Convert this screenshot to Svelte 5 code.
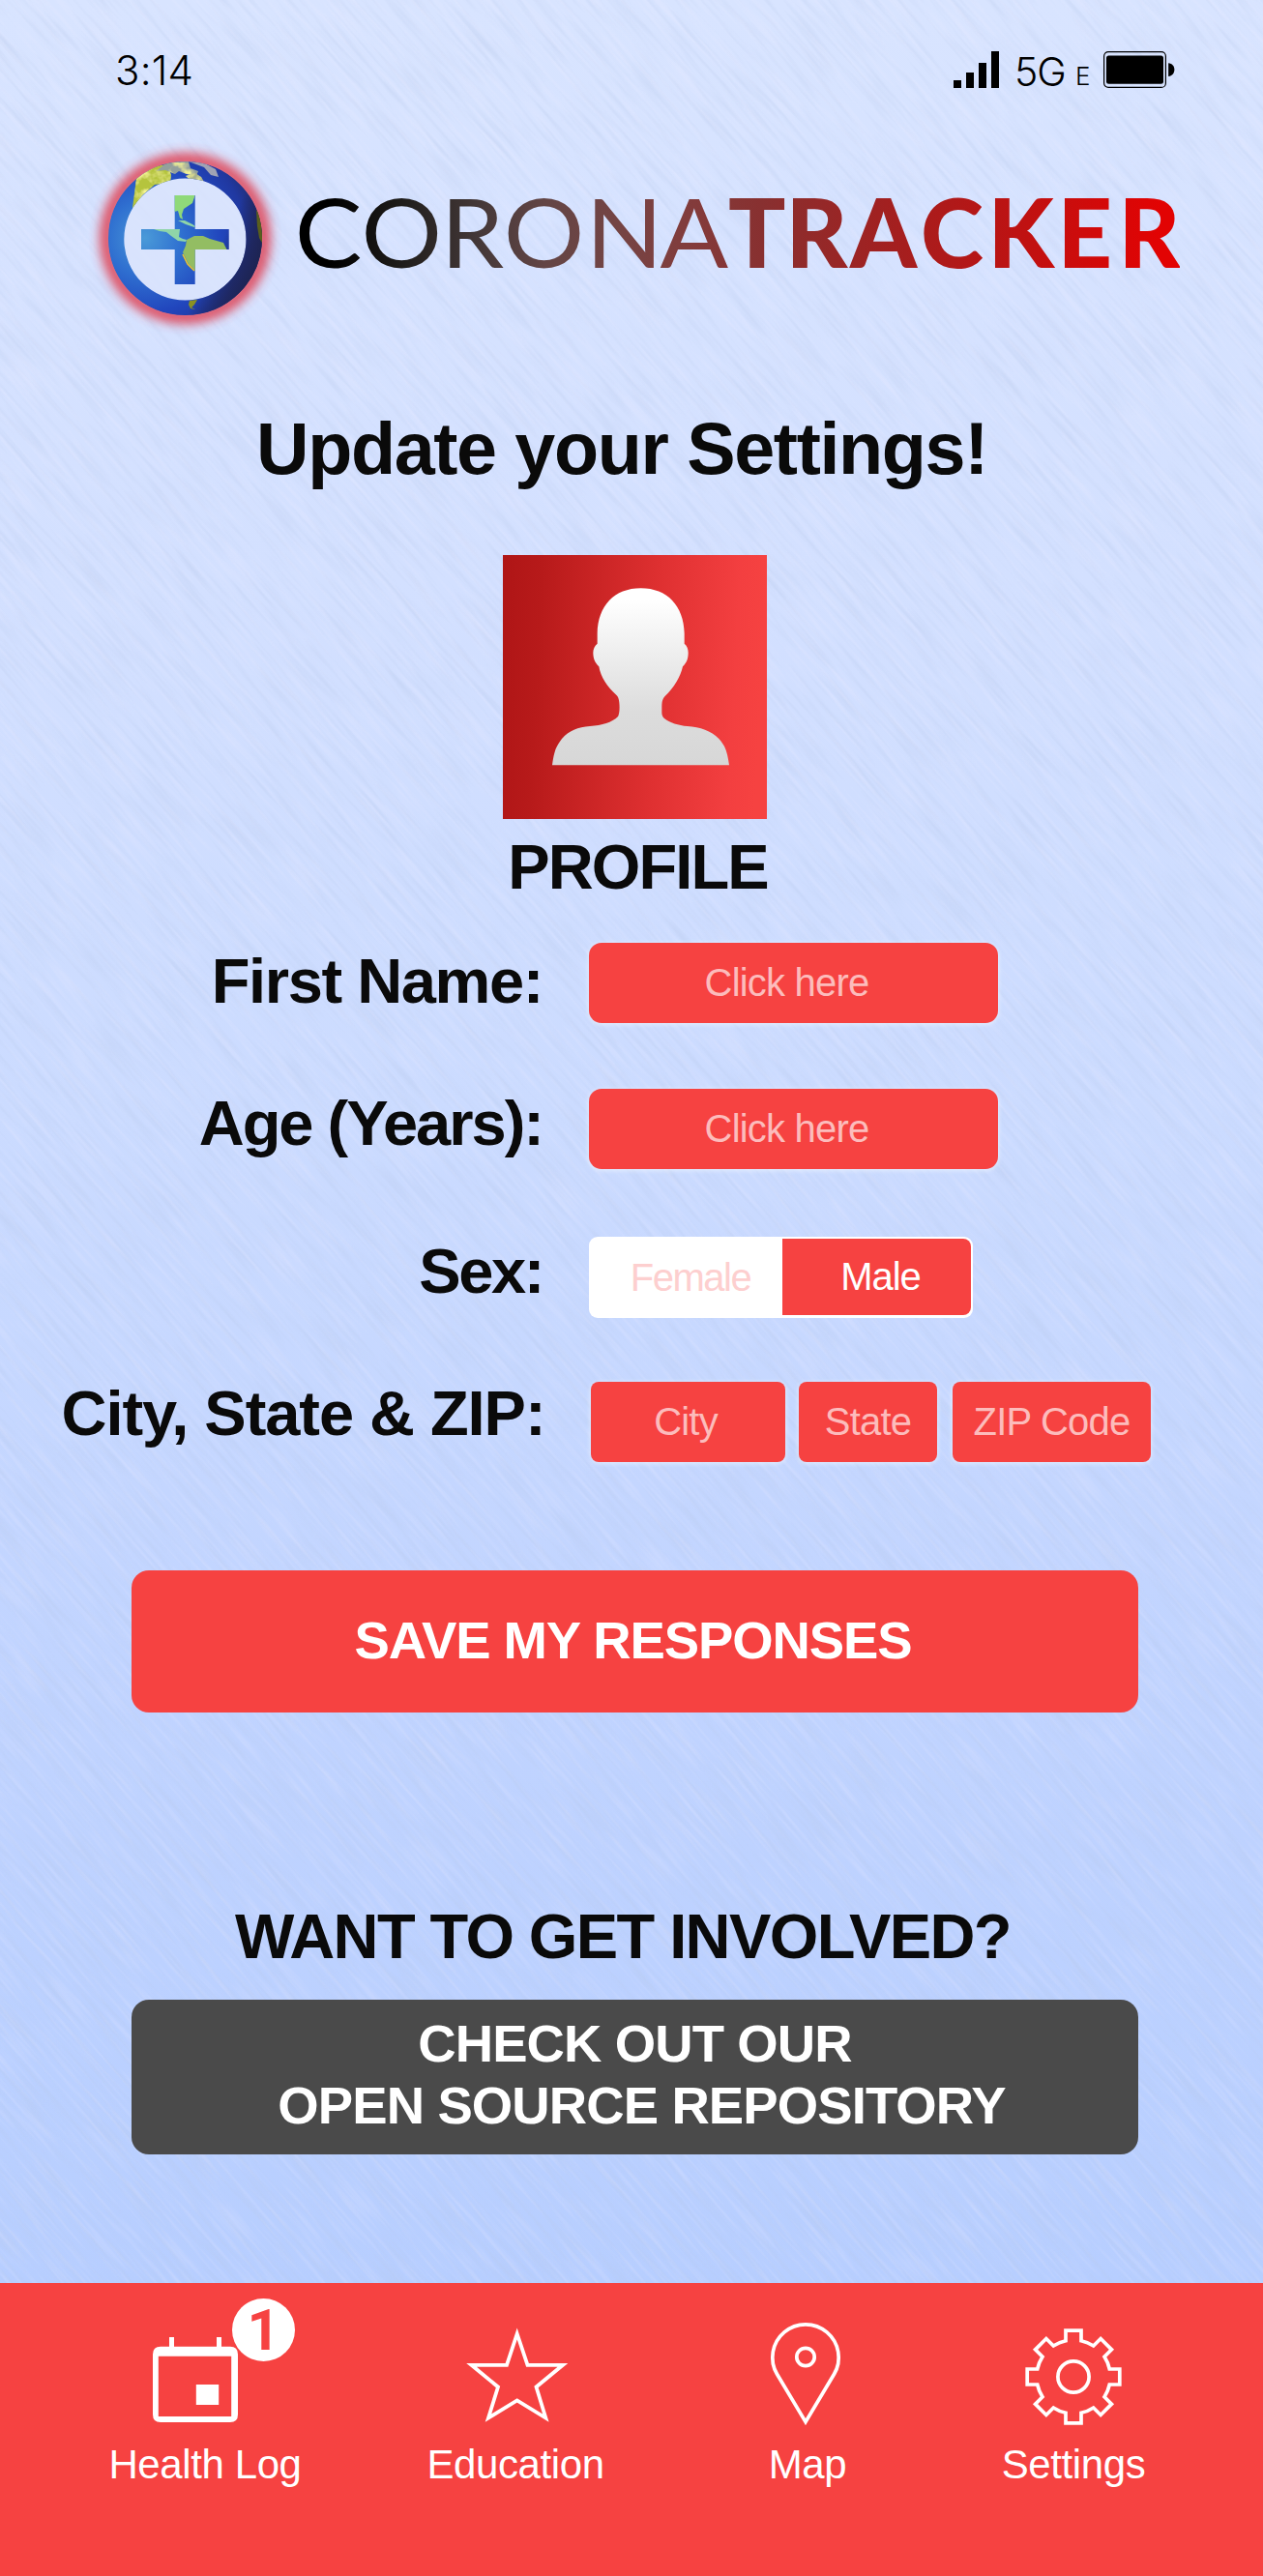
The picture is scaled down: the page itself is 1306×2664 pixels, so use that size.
<script>
  const tooth = [[-8, -37.3], [-8, -47.8], [8, -47.8], [8, -37.3]];
  // Eight identical teeth joined by arcs of the gear's body
  const gearPath =
    [0, 1, 2, 3, 4, 5, 6, 7]
      .map((n) => {
        const a = (n * Math.PI) / 4;
        const pts = tooth.map(([x, y]) =>
          `${(50 + x * Math.cos(a) - y * Math.sin(a)).toFixed(2)} ${(50 + x * Math.sin(a) + y * Math.cos(a)).toFixed(2)}`
        );
        return `${n === 0 ? 'M' : 'A38.2 38.2 0 0 1 '}${pts[0]}L${pts[1]}L${pts[2]}L${pts[3]}`;
      })
      .join('') + 'A38.2 38.2 0 0 1 42 12.7Z';
</script>

<div class="screen">
  <svg class="texture" viewBox="0 0 1306 2664" aria-hidden="true">
    <filter id="dark" x="0" y="0" width="100%" height="100%">
      <feTurbulence type="fractalNoise" baseFrequency="0.013 0.19" numOctaves="2" seed="4" />
      <feColorMatrix values="0 0 0 0 0.48  0 0 0 0 0.58  0 0 0 0 0.82  1.6 0 0 0 -0.74" />
    </filter>
    <filter id="pale" x="0" y="0" width="100%" height="100%">
      <feTurbulence type="fractalNoise" baseFrequency="0.014 0.22" numOctaves="2" seed="11" />
      <feColorMatrix values="0 0 0 0 0.9  0 0 0 0 0.86  0 0 0 0 1  1.8 0 0 0 -0.85" />
    </filter>
    <g transform="rotate(49 653 1332)">
      <rect x="-1000" y="-300" width="3300" height="3300" filter="url(#dark)" opacity="0.48" />
      <rect x="-1000" y="-300" width="3300" height="3300" filter="url(#pale)" opacity="0.28" />
    </g>
  </svg>

  <header class="status">
    <span class="time">3:14</span>
    <span class="signal"><i class="b1"></i><i class="b2"></i><i class="b3"></i><i class="b4"></i></span>
    <span class="net">5G</span>
    <span class="net-e">E</span>
    <svg class="battery" width="74" height="38" viewBox="0 0 74 38">
      <rect x="0.6" y="0.6" width="63.8" height="36.8" rx="4.5" fill="none" stroke="#000" stroke-width="1.2" />
      <rect x="3" y="4.4" width="59" height="29.4" rx="2.5" />
      <path d="M67.2 12.3C71 12.6 73.4 15.5 73.4 19S71 25.7 67.2 26Z" />
    </svg>
  </header>

  <div class="brand">
    <svg width="1140" height="230" viewBox="80 130 1140 230" role="img" aria-label="CoronaTracker">
      <defs>
        <filter id="glow" x="-40%" y="-40%" width="180%" height="180%"><feGaussianBlur stdDeviation="5.5" /></filter>
        <filter id="soft" x="-20%" y="-20%" width="140%" height="140%"><feGaussianBlur stdDeviation="0.7" /></filter>
        <filter id="land" x="0" y="0" width="100%" height="100%">
          <feTurbulence type="fractalNoise" baseFrequency="0.09" numOctaves="3" seed="7" result="n" />
          <feColorMatrix in="n" values="0 0 0 0 0.93  0 0 0 0 0.92  0 0 0 0 0.3  3 0 0 0 -1.3" result="c" />
          <feComposite in="c" in2="SourceGraphic" operator="in" result="t" />
          <feMerge><feMergeNode in="SourceGraphic" /><feMergeNode in="t" /></feMerge>
        </filter>
        <radialGradient id="sea" gradientUnits="userSpaceOnUse" cx="150" cy="246" r="130">
          <stop offset="0" stop-color="#4a9ad8" />
          <stop offset="0.3" stop-color="#2f6fd0" />
          <stop offset="0.6" stop-color="#2146bd" />
          <stop offset="0.8" stop-color="#2038a0" />
          <stop offset="1" stop-color="#22285c" />
        </radialGradient>
        <linearGradient id="night" gradientUnits="userSpaceOnUse" x1="205" y1="240" x2="272" y2="272">
          <stop offset="0.35" stop-color="#1a1c40" stop-opacity="0" />
          <stop offset="0.75" stop-color="#1e2350" stop-opacity="0.75" />
          <stop offset="1" stop-color="#1c2148" stop-opacity="0.85" />
        </linearGradient>
        <linearGradient id="wordmark" gradientUnits="userSpaceOnUse" x1="340" y1="0" x2="1200" y2="0">
          <stop offset="0" stop-color="#000" />
          <stop offset="0.09" stop-color="#201e1c" />
          <stop offset="0.18" stop-color="#443838" />
          <stop offset="0.26" stop-color="#634545" />
          <stop offset="0.35" stop-color="#754444" />
          <stop offset="0.44" stop-color="#833b3b" />
          <stop offset="0.52" stop-color="#883030" />
          <stop offset="0.67" stop-color="#a22020" />
          <stop offset="0.84" stop-color="#c01111" />
          <stop offset="1" stop-color="#e20303" />
        </linearGradient>
        <linearGradient id="wordmark-wide" href="#wordmark" x1="321" x2="1132" />
        <clipPath id="globe">
          <path clip-rule="evenodd" d="M112 246.5a79.5 79.5 0 1 0 159 0a79.5 79.5 0 1 0-159 0ZM128.3 247.5a63.1 63.1 0 1 1 126.2 0a63.1 63.1 0 1 1-126.2 0Z" />
          <path d="M180.7 202h21v35h35v21h-35v36h-21v-36H146v-21h34.7Z" />
        </clipPath>
      </defs>
      <circle cx="191.5" cy="246.5" r="81" fill="none" stroke="#e0384a" stroke-width="15" opacity="0.85" filter="url(#glow)" />
      <circle cx="191.5" cy="247.5" r="64" fill="#dae3fc" opacity="0.8" />
      <g clip-path="url(#globe)">
        <circle cx="191.5" cy="246.5" r="80" fill="url(#sea)" />
        <circle cx="191.5" cy="246.5" r="80" fill="url(#night)" />
        <g filter="url(#land)">
          <path fill="#b5c43c" d="M137 215l4-30 12-12 20-3 4 11-1 8-16 2-13 11-6 12Z" />
          <path fill="#93a09c" d="M161 177l12-9 22-1 2 7 8 3-2 5-10-2-8-3-4 3-10-4Z" />
          <path fill="#a7b08c" d="M192 182l10-3 6 4 3 5-12 0Z" />
        </g>
        <g filter="url(#soft)">
          <path fill="#a0a3b4" d="M195 167l15 1 13 7 3 8-8-2-7-8-8-3Z" />
          <path fill="#8fd97a" d="M180 201h22l-3 9-9 6-2 6 1 5-3-2-2-7-4 1Z" />
          <path fill="#8fd5a8" d="M159 237h27l-1 8 4 2 4 1-1 2-8-1-7-5-5-4-7-1ZM184 228l7 0 8 4 3 2-1 1-9-3Z" />
          <path fill="#93bd63" d="M193 248l8-4 9 0 7 3 14 4 4 8-20 4-8 16-4 2-8-8-6-12 3-7Z" />
          <path fill="none" stroke="#e8c234" stroke-width="1.6" d="M189 263l5 10 7 7" />
          <path fill="#8a9222" d="M196 311l8-1-3 5-3 3 4 2-5-1-2-4Z" />
          <path fill="#5a5e1e" d="M265 217l7 8v28l-4-7-2-12Z" />
        </g>
      </g>
      <g font-family="Lato, 'Liberation Sans', sans-serif" font-size="98.5">
        <text transform="scale(1.06 1)" fill="url(#wordmark-wide)" font-weight="400" y="276.8" x="287.6 352.4 430 491.4 571.5 643.8">CORONA</text>
        <text fill="url(#wordmark)" font-weight="900" y="276.8" x="753 812.5 879 952 1021.5 1093.5 1156.5">TRACKER</text>
      </g>
    </svg>
  </div>

  <h1>Update your Settings!</h1>

  <section class="profile">
    <svg width="273" height="273" viewBox="60 42 819 819" aria-hidden="true">
      <defs>
        <linearGradient id="tile" x1="0" y1="0" x2="1" y2="0.05">
          <stop offset="0" stop-color="#af1516" />
          <stop offset="0.15" stop-color="#b71a1a" />
          <stop offset="0.6" stop-color="#df3031" />
          <stop offset="0.9" stop-color="#f33f40" />
          <stop offset="1" stop-color="#f64241" />
        </linearGradient>
        <linearGradient id="bust" x1="0" y1="0" x2="0" y2="1">
          <stop offset="0.06" stop-color="#fff" />
          <stop offset="0.7" stop-color="#dcdcdc" />
          <stop offset="1" stop-color="#d7d7d7" />
        </linearGradient>
      </defs>
      <rect x="60" y="42" width="819" height="819" fill="url(#tile)" />
      <path fill="url(#bust)" d="M213 694C217 665 222 645 228 635C250 593 283 577 330 573C368 570 398 562 417 543C421 535 423 520 421 500C420 488 417 480 412 476C385 453 363 420 358 388C345 375 340 362 340 345C340 332 345 324 353 317V285C355 200 405 145 488 145C570 145 621 200 623 285V317C631 324 635 332 635 345C635 362 631 375 618 388C611 420 591 453 562 481C556 488 553 496 553 512V530C553 537 555 543 560 548C578 563 605 570 632 573C683 577 722 592 747 635C755 650 759 672 762 694Z" />
    </svg>
    <h2>PROFILE</h2>
  </section>

  <form class="form">
    <div class="row r1"><label for="first">First Name:</label><button type="button" id="first" class="field wide">Click here</button></div>
    <div class="row r2"><label for="age">Age (Years):</label><button type="button" id="age" class="field wide">Click here</button></div>
    <div class="row r3">
      <span class="label">Sex:</span>
      <div class="toggle">
        <button type="button" class="female">Female</button>
        <button type="button" class="male">Male</button>
      </div>
    </div>
    <div class="row r4">
      <span class="label">City, State &amp; ZIP:</span>
      <button type="button" class="field city">City</button>
      <button type="button" class="field state">State</button>
      <button type="button" class="field zip">ZIP Code</button>
    </div>
  </form>

  <button type="button" class="action save"><span>SAVE MY RESPONSES</span></button>

  <h2 class="involved">WANT TO GET INVOLVED?</h2>
  <button type="button" class="action repo"><span>CHECK OUT OUR</span><span class="second">OPEN SOURCE REPOSITORY</span></button>

  <nav>
    <a class="log" href="#log">
      <span class="pic">
        <svg width="88" height="100" viewBox="158 2408 88 100" fill="#fff">
          <path fill-rule="evenodd" d="M175 2417h5v9.7h44v-9.7h5v9.7h9q8 0 8 8v62.3q0 8-8 8h-72q-8 0-8-8v-62.3q0-8 8-8h9ZM163.8 2436.7v62.3h75.4v-62.3Z" />
          <rect x="202.8" y="2466" width="23.4" height="21" />
        </svg>
        <b class="badge">1</b>
      </span>
      <span class="cap">Health Log</span>
    </a>
    <a class="edu" href="#education">
      <span class="pic">
        <svg width="110" height="110" viewBox="480 2403 110 110" fill="none" stroke="#fff" stroke-width="3.8" stroke-miterlimit="10">
          <path d="M534.7 2414.5L545.5 2446.8H582L554.5 2469.5L564.3 2501.5L534.7 2483.5L505 2501.5L515 2469.5L487.5 2446.8H524Z" />
        </svg>
      </span>
      <span class="cap">Education</span>
    </a>
    <a class="map" href="#map">
      <span class="pic">
        <svg width="80" height="110" viewBox="793 2400 80 110" fill="none" stroke="#fff" stroke-width="3.7">
          <path d="M833 2504.6L803.5 2455.3A34.2 34.2 0 1 1 862.5 2455.3Z" />
          <circle cx="833" cy="2437.5" r="9.2" />
        </svg>
      </span>
      <span class="cap">Map</span>
    </a>
    <a class="set" href="#settings">
      <span class="pic">
        <svg width="100" height="100" viewBox="0 0 100 100" fill="none" stroke="#fff" stroke-width="3.7">
          <path d={gearPath} />
          <circle cx="50" cy="50" r="16.1" />
        </svg>
      </span>
      <span class="cap">Settings</span>
    </a>
  </nav>
</div>

<style>
  :global(body) { margin: 0; }
  .screen {
    position: relative;
    isolation: isolate;
    box-sizing: border-box;
    width: 1306px;
    height: 2664px;
    overflow: hidden;
    display: flex;
    flex-direction: column;
    background: linear-gradient(#d8e4ff 0, #d3e0ff 600px, #cbdbff 1150px, #c1d4ff 1700px, #b7ceff 2361px);
    color: #0a0a0a;
    font-family: 'Liberation Sans', Arial, sans-serif;
  }
  .texture { position: absolute; inset: 0; width: 1306px; height: 2664px; z-index: -1; }
  button {
    border: 0;
    padding: 0;
    margin: 0;
    font: inherit;
    color: inherit;
    background: none;
  }
  h1, h2 { margin: 0; font-weight: 700; white-space: nowrap; }

  .status {
    display: flex;
    box-sizing: border-box;
    height: 130px;
    padding: 53px 91px 0 119px;
    align-items: flex-start;
    color: #000;
    line-height: 38px;
  }
  .time { font: 300 42px/40px Inter, Roboto, sans-serif; flex: 1; letter-spacing: 0.2px; }
  .signal { display: flex; align-items: flex-end; gap: 5px; height: 38px; }
  .signal i { width: 8px; background: #000; }
  .b1 { height: 8px; }
  .b2 { height: 16px; }
  .b3 { height: 26px; }
  .b4 { height: 38px; }
  .net { font: 300 41px/42px Inter, Roboto, sans-serif; margin-left: 16px; width: 63px; letter-spacing: -1px; }
  .net-e { font: 300 26px/52px Inter, Roboto, sans-serif; width: 29px; }
  .battery { flex: none; }

  .brand { height: 230px; padding-left: 80px; }
  .brand svg { display: block; }

  h1 {
    margin-top: 64px;
    height: 80px;
    width: 1286px;
    text-align: center;
    font-size: 75.5px;
    line-height: 80px;
    letter-spacing: -1.35px;
  }
  .profile { margin-top: 70px; display: flex; flex-direction: column; align-items: center; height: 400.5px; }
  .profile svg { display: block; margin-left: 7px; }
  .profile h2 { font-size: 65px; line-height: 80px; margin: 10px 0 0 13px; letter-spacing: -1.9px; }

  .form { display: flex; flex-direction: column; }
  .row { display: flex; align-items: center; height: 83px; }
  .row label, .row .label {
    width: 561px;
    margin-right: 47.5px;
    text-align: right;
    white-space: nowrap;
    font-size: 65px;
    line-height: 80px;
    font-weight: 700;
    letter-spacing: -1.4px;
  }
  .r1 label { padding-bottom: 3px; }
  .r2 { margin-top: 68px; }
  .r2 label { padding-bottom: 11px; letter-spacing: -2px; }
  .r3 { margin-top: 71px; }
  .r3 .label { padding-bottom: 13px; letter-spacing: -2.4px; }
  .r4 { margin-top: 66px; }
  .r4 .label { padding-bottom: 17px; width: 563.5px; margin-right: 47.5px; letter-spacing: -1.05px; }
  .field {
    box-sizing: border-box;
    height: 83px;
    border-radius: 13px;
    background: #f64241;
    box-shadow: 0 1px 4px 1px rgba(240, 246, 255, 0.6);
    color: #fcbcbc;
    font-size: 40px;
    letter-spacing: -0.8px;
    white-space: nowrap;
  }
  .wide { width: 423px; padding-right: 13px; }
  .city { width: 201px; border-radius: 8px; padding-right: 5px; }
  .state { width: 143px; border-radius: 8px; margin-left: 14px; }
  .zip { width: 205px; border-radius: 8px; margin-left: 16px; }
  .toggle {
    display: flex;
    box-sizing: border-box;
    width: 397px;
    height: 84px;
    padding: 2px;
    border-radius: 9px;
    background: #fff;
    font-size: 40px;
  }
  .toggle button { letter-spacing: -1.5px; }
  .toggle .female { width: 198px; padding-left: 9px; color: #fdcfcf; }
  .toggle .male { width: 195px; padding-left: 9px; background: #f64241; color: #fff; border-radius: 0 8px 8px 0; height: 79px; letter-spacing: -1.1px; }

  .action {
    display: flex;
    flex-direction: column;
    align-items: center;
    justify-content: center;
    margin-left: 136px;
    width: 1041px;
    border-radius: 18px;
    color: #fff;
    font-size: 54.5px;
    line-height: 64px;
    font-weight: 700;
    white-space: nowrap;
    letter-spacing: -0.9px;
  }
  .save { margin-top: 112px; height: 147px; background: #f64241; padding-right: 4px; letter-spacing: -1.1px; }
  .involved { margin-top: 192px; height: 80px; width: 1288px; text-align: center; font-size: 65px; line-height: 80px; letter-spacing: -1.6px; }
  .repo { margin-top: 25px; height: 160px; background: #4a4a4a; padding-bottom: 4px; }
  .second { margin-left: 14px; }

  nav { margin-top: auto; height: 303px; background: #f64241; display: flex; color: #fff; }
  nav a {
    display: flex;
    flex-direction: column;
    align-items: center;
    box-sizing: border-box;
    padding-top: 37px;
    color: inherit;
    text-decoration: none;
  }
  .pic { display: flex; position: relative; height: 120px; align-items: center; }
  .log { width: 260px; margin-left: 82px; }
  .log .pic { left: -10px; }
  .edu { width: 260px; margin-left: 61px; }
  .edu .pic { left: 2px; top: -1px; }
  .map { width: 160px; margin-left: 92px; }
  .map .pic { top: -3px; left: -2px; }
  .set { width: 220px; margin-left: 85px; }
  .badge {
    position: absolute;
    left: 82px;
    top: -21px;
    width: 65px;
    height: 65px;
    border-radius: 50%;
    background: #fff;
    color: #f64241;
    text-align: center;
    font: 700 59px/65px Roboto, sans-serif;
  }
  .cap { font-size: 42px; line-height: 54px; margin-top: 4px; white-space: nowrap; letter-spacing: -0.4px; }
</style>
